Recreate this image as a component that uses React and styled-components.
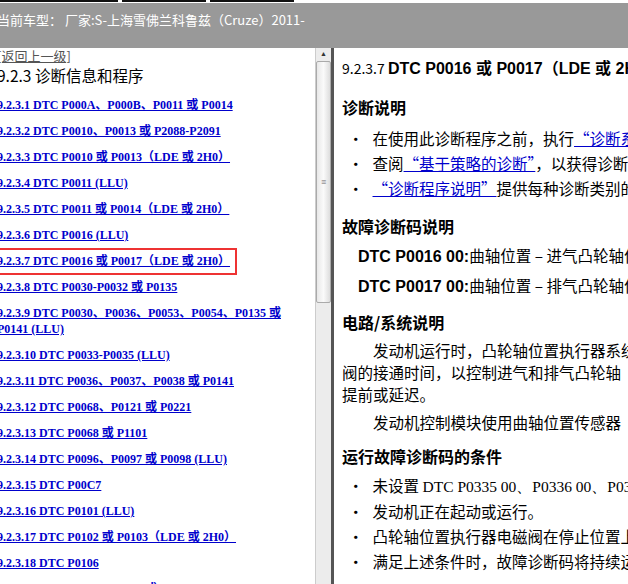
import React from "react";
import styled, { createGlobalStyle } from "styled-components";

const G = createGlobalStyle`
  html,body{margin:0;padding:0;background:#fff;overflow:hidden;}
  body{width:628px;height:584px;}
`;
const Page = styled.div`width:628px;height:584px;display:flex;flex-direction:column;overflow:hidden;`;
const Top = styled.div`height:3px;background:#fff;display:flex;gap:4px;
  & > span{height:2px;background:#111;}
`;
const Header = styled.div`height:45px;background:#999;color:#fff;font:13px "Noto Sans CJK SC","Liberation Sans",sans-serif;padding:8px 0 0 0;box-sizing:border-box;margin-left:-3px;line-height:18px;`;
const Body = styled.div`flex:1;display:flex;min-height:0;`;
const Left = styled.div`width:318px;overflow:hidden;margin-left:-3px;font-family:"Liberation Serif","Noto Sans CJK SC",serif;`;
const Back = styled.div`font:13px "Noto Sans CJK SC",sans-serif;color:#555;text-decoration:underline;line-height:16px;`;
const Title = styled.div`font:15.5px "Noto Sans CJK SC",sans-serif;color:#000;line-height:22px;margin-bottom:6px;`;
const Item = styled.div`height:26px;display:flex;align-items:center;position:relative;
  a{color:#00c;font-weight:bold;font-size:12px;text-decoration:underline;white-space:nowrap;line-height:16px;}
  ${p=>p.$two&&`height:42px;a{white-space:normal;}`}
`;
const Box = styled.div`position:absolute;left:0;top:0;width:240px;height:27px;border:2px solid #e33;box-sizing:border-box;`;
const Scroll = styled.div`width:16px;background:#ececec;border-left:1px solid #ccc;box-sizing:border-box;display:flex;flex-direction:column;align-items:center;`;
const Arrow = styled.div`font-size:7px;color:#333;height:13px;line-height:13px;`;
const Thumb = styled.div`width:13px;height:240px;background:linear-gradient(90deg,#e8e8e8,#fafafa,#ddd);border:1px solid #aaa;border-radius:2px;display:flex;align-items:center;justify-content:center;font-size:9px;color:#666;`;
const Divider = styled.div`width:4px;background:#fff;border-left:3px solid #555;box-sizing:border-box;`;
const Right = styled.div`flex:1;overflow:hidden;padding:8px 0 0 7px;font-family:"Noto Sans CJK SC","Liberation Sans",sans-serif;color:#000;white-space:nowrap;`;
const H1 = styled.div`line-height:22px;b{font-family:"Liberation Sans","Noto Sans CJK SC",sans-serif;font-size:16px;}span{font-size:14px;}`;
const H2 = styled.div`font-size:16px;font-weight:bold;line-height:22px;margin:${p=>p.$m||"14px 0 8px"};`;
const Li = styled.div`font-size:15.5px;line-height:25px;padding-left:6px;&::before{content:"•";margin-right:9px;}
  a{color:#00c;text-decoration:underline;}
  .s{font-family:"Liberation Serif",serif;font-size:15.5px;}`;
const D = styled.div`font-size:15.5px;line-height:28px;padding-left:16px;b{font-family:"Liberation Sans",sans-serif;font-size:16px;}`;
const P = styled.div`font-size:15.5px;line-height:22px;text-indent:${p=>p.$i?"31px":"0"};margin-bottom:${p=>p.$mb||0}px;`;

const items=[
  "9.2.3.1 DTC P000A、P000B、P0011 或 P0014","9.2.3.2 DTC P0010、P0013 或 P2088-P2091","9.2.3.3 DTC P0010 或 P0013（LDE 或 2H0）","9.2.3.4 DTC P0011 (LLU)","9.2.3.5 DTC P0011 或 P0014（LDE 或 2H0）","9.2.3.6 DTC P0016 (LLU)","9.2.3.7 DTC P0016 或 P0017（LDE 或 2H0）","9.2.3.8 DTC P0030-P0032 或 P0135","9.2.3.9 DTC P0030、P0036、P0053、P0054、P0135 或 P0141 (LLU)","9.2.3.10 DTC P0033-P0035 (LLU)","9.2.3.11 DTC P0036、P0037、P0038 或 P0141","9.2.3.12 DTC P0068、P0121 或 P0221","9.2.3.13 DTC P0068 或 P1101","9.2.3.14 DTC P0096、P0097 或 P0098 (LLU)","9.2.3.15 DTC P00C7","9.2.3.16 DTC P0101 (LLU)","9.2.3.17 DTC P0102 或 P0103（LDE 或 2H0）","9.2.3.18 DTC P0106","9.2.3.19 DTC P0106、P0107 或 P0108"];

export default function App(){return(<><G/><Page>
<Top><span style={{width:118}}/><span style={{width:84}}/><span style={{width:84}}/></Top>
<Header>当前车型： 厂家:S-上海雪佛兰科鲁兹（Cruze）2011-</Header>
<Body>
<Left>
<Back>[返回上一级]</Back>
<Title>9.2.3 诊断信息和程序</Title>
{items.map((t,i)=>(<Item key={i} $two={i===8}>{i===6&&<Box/>}<a>{t}</a></Item>))}
</Left>
<Scroll><Arrow>▲</Arrow><Thumb>≡</Thumb></Scroll>
<Divider/>
<Right>
<H1><span>9.2.3.7 </span><b>DTC P0016 或 P0017（LDE 或 2H0）</b></H1>
<H2 $m="16px 0 8px">诊断说明</H2>
<Li>在使用此诊断程序之前，执行<a>“诊断系统检查 - 车辆”</a></Li>
<Li>查阅<a>“基于策略的诊断”</a>，以获得诊断方法概述。</Li>
<Li><a>“诊断程序说明”</a>提供每种诊断类别的概述。</Li>
<H2 $m="14px 0 4px">故障诊断码说明</H2>
<D><b>DTC P0016 00:</b>曲轴位置 – 进气凸轮轴位置不相关</D>
<D><b>DTC P0017 00:</b>曲轴位置 – 排气凸轮轴位置不相关</D>
<H2 $m="10px 0 6px">电路/系统说明</H2>
<P $i>发动机运行时，凸轮轴位置执行器系统</P>
<P>阀的接通时间，以控制进气和排气凸轮轴</P>
<P $mb={6}>提前或延迟。</P>
<P $i>发动机控制模块使用曲轴位置传感器</P>
<H2 $m="12px 0 6px">运行故障诊断码的条件</H2>
<Li>未设置 <span className="s">DTC P0335 00、P0336 00、P0340 00</span></Li>
<Li>发动机正在起动或运行。</Li>
<Li>凸轮轴位置执行器电磁阀在停止位置上</Li>
<Li>满足上述条件时，故障诊断码将持续运行</Li>
</Right>
</Body>
</Page></>);}
